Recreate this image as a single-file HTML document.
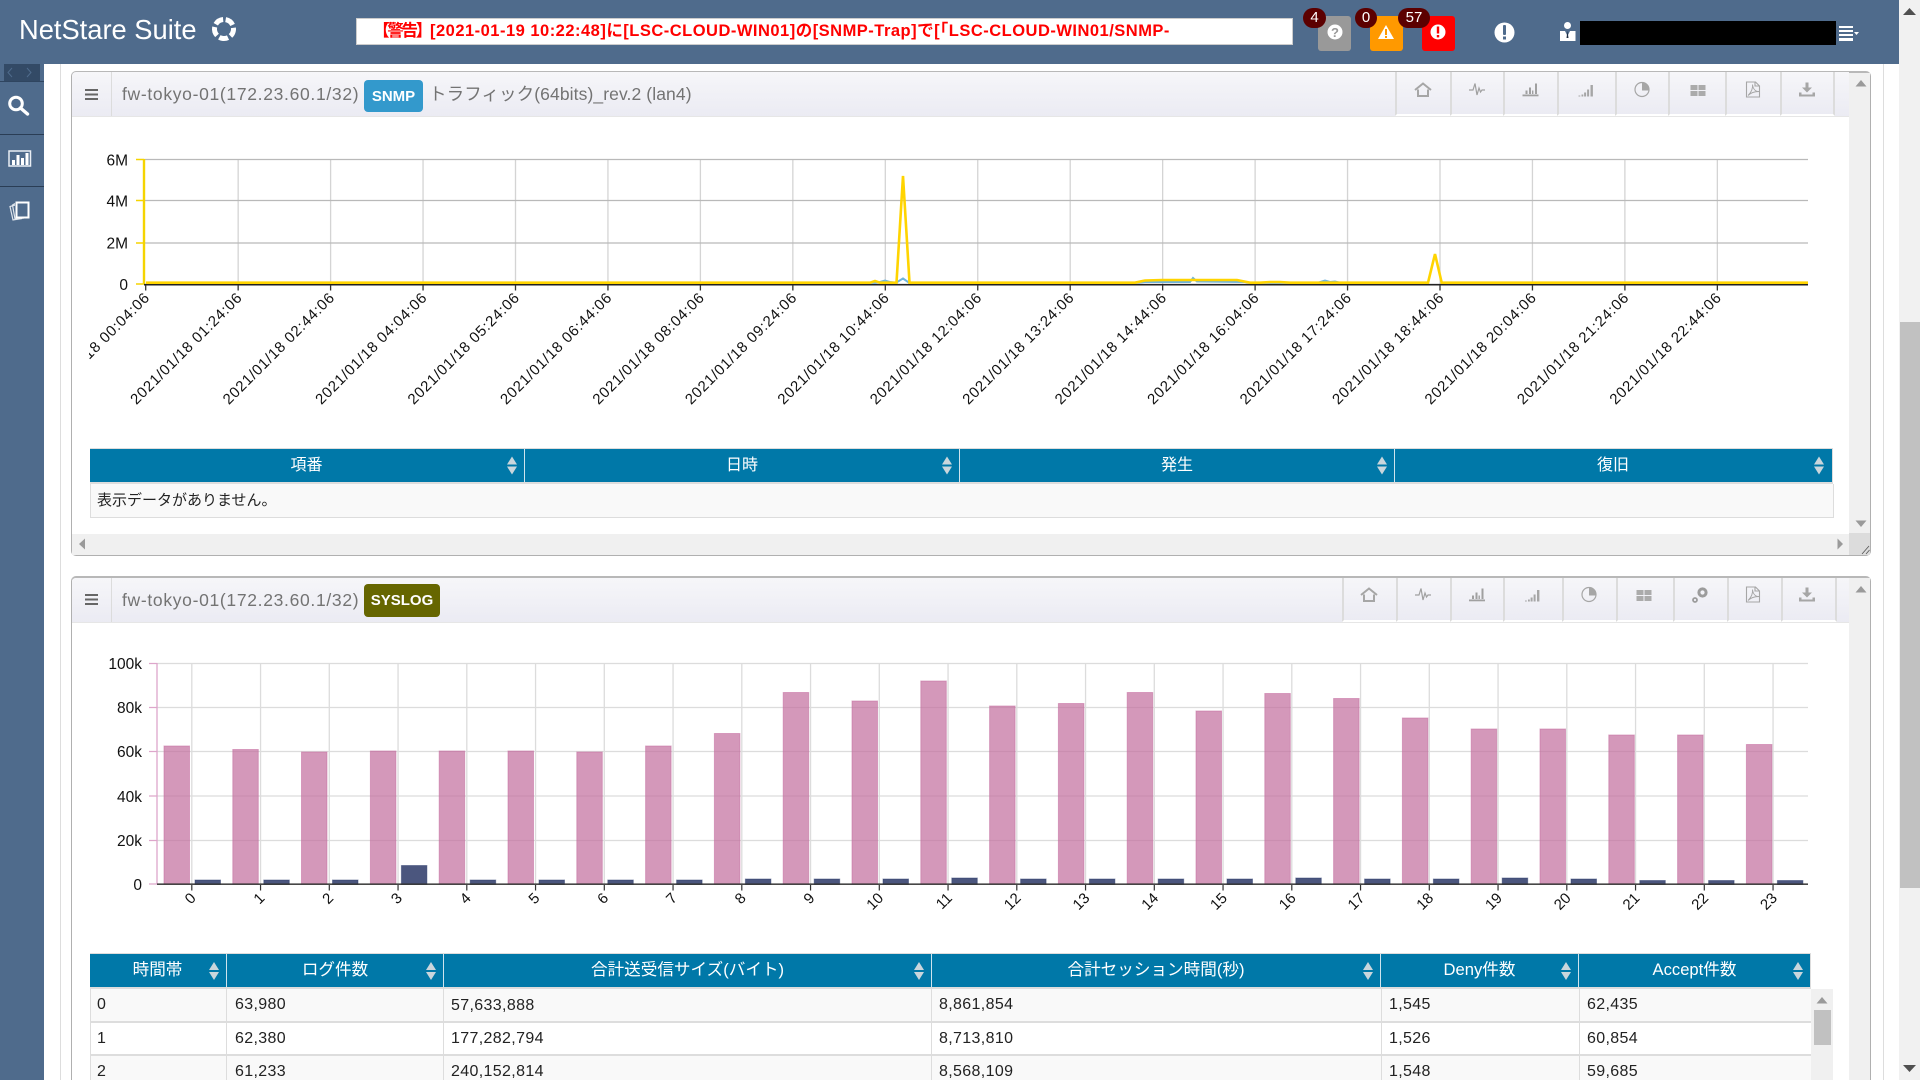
<!DOCTYPE html>
<html lang="ja"><head><meta charset="utf-8"><title>NetStare Suite</title>
<style>
html,body{margin:0;padding:0;width:1920px;height:1080px;overflow:hidden;background:#fff}
body{position:relative;font-family:"Liberation Sans","Noto Sans CJK JP",sans-serif;color:#222}
.a{position:absolute;box-sizing:border-box}
.th{position:absolute;color:#fff;font-size:16px;text-align:center;white-space:nowrap}
.t2{font-size:16.6px}
.td{position:absolute;font-size:16px;letter-spacing:.35px;color:#222;white-space:nowrap;line-height:20px}
.ph{position:absolute;background:linear-gradient(#f6f6f9,#ebebf3);height:44px}
.pt{position:absolute;font-size:17.5px;letter-spacing:.68px;color:#737373;white-space:nowrap;line-height:24px}
.bd{position:absolute;border-radius:4px;color:#fff;font-weight:bold;text-align:center;font-size:15px}
.cell{position:absolute;height:42px;background:linear-gradient(#f6f6f9,#ebebf3);border-left:2px solid #dcdcdc;border-bottom:2px solid #fff;box-sizing:content-box}
.cnt{position:absolute;background:#5c0000;color:#fff;font-size:15px;text-align:center;height:20px;line-height:19px;top:8px;border-radius:11px}
</style></head><body>

<!-- header -->
<div class="a" style="left:0;top:0;width:1899px;height:64px;background:#4f6b8c"></div>
<div class="a" style="left:19px;top:12px;font-size:27.3px;line-height:36px;color:#fff;white-space:nowrap">NetStare Suite</div>
<div class="a" style="left:356px;top:18px;width:937px;height:27px;background:#fff;border:1px solid #ccc;overflow:hidden;color:#f00;font-weight:bold;font-size:16.5px;letter-spacing:.49px;line-height:25px;padding-left:16px;white-space:nowrap"><span style="letter-spacing:-2.25px">【警告】</span>[2021-01-19 10:22:48]に[LSC-CLOUD-WIN01]の[SNMP-Trap]で[「LSC-CLOUD-WIN01/SNMP-</div>
<div class="a" style="left:1318px;top:16px;width:33px;height:35px;background:#999;border-radius:3px"></div>
<div class="a" style="left:1370px;top:16px;width:33px;height:35px;background:#f90;border-radius:3px"></div>
<div class="a" style="left:1422px;top:16px;width:33px;height:35px;background:#f00;border-radius:3px"></div>
<div class="cnt" style="left:1303px;width:23px">4</div>
<div class="cnt" style="left:1355px;width:22px">0</div>
<div class="cnt" style="left:1398px;width:32px">57</div>
<div class="a" style="left:1580px;top:21px;width:256px;height:24px;background:#000"></div>

<!-- sidebar -->
<div class="a" style="left:0;top:64px;width:44px;height:1016px;background:#4f6b8c"></div>
<div class="a" style="left:4px;top:64px;width:36px;height:17px;background:#334a66"></div>
<div class="a" style="left:0;top:81px;width:44px;height:1px;background:#2f4560"></div>
<div class="a" style="left:0;top:134px;width:44px;height:1px;background:#2a3d55"></div>
<div class="a" style="left:0;top:186px;width:44px;height:1px;background:#2a3d55"></div>

<!-- page lines & window scrollbar -->
<div class="a" style="left:60px;top:64px;width:1px;height:1016px;background:#ddd"></div>
<div class="a" style="left:1883px;top:64px;width:1px;height:1016px;background:#ddd"></div>
<div class="a" style="left:1899px;top:0;width:21px;height:1080px;background:#f1f1f1"></div>
<div class="a" style="left:1900px;top:322px;width:20px;height:566px;background:#c1c1c1"></div>

<!-- panel 1 -->
<div class="a" style="left:71px;top:71px;width:1800px;height:485px;border:1px solid #b0b0b0;border-top:2px solid #b8b8b8;border-radius:5px;background:#fff"></div>
<div class="a" style="left:1849px;top:73px;width:21px;height:461px;background:#f0f0f0"></div>
<div class="a" style="left:72px;top:534px;width:1777px;height:21px;background:#f0f0f0"></div>
<div class="a" style="left:1849px;top:533px;width:21px;height:22px;background:#dcdcdc"></div>
<div class="ph" style="left:72px;top:72px;width:1777px;border-radius:4px 0 0 0"></div>
<div class="a" style="left:72px;top:116px;width:1777px;height:1px;background:#e6e6e6"></div>
<div class="a" style="left:111px;top:72px;width:1px;height:44px;background:#dcdcdc"></div>
<div class="pt" style="left:122px;top:82px">fw-tokyo-01(172.23.60.1/32)</div>
<div class="bd" style="left:364px;top:80px;width:59px;height:32px;line-height:33px;background:#39c">SNMP</div>
<div class="pt" style="left:429px;top:82px;letter-spacing:.1px">トラフィック(64bits)_rev.2 (lan4)</div>
<div class="cell" style="left:1395px;top:72px;width:54px"></div>
<div class="cell" style="left:1450px;top:72px;width:52px"></div>
<div class="cell" style="left:1503px;top:72px;width:53px"></div>
<div class="cell" style="left:1557px;top:72px;width:57px"></div>
<div class="cell" style="left:1615px;top:72px;width:52px"></div>
<div class="cell" style="left:1668px;top:72px;width:56px"></div>
<div class="cell" style="left:1725px;top:72px;width:54px"></div>
<div class="cell" style="left:1780px;top:72px;width:51px;border-right:2px solid #dcdcdc"></div>

<!-- table 1 -->
<div class="a" style="left:90px;top:448px;width:1743px;height:36px;background:#ddd"></div>
<div class="a" style="left:90px;top:449px;width:1742px;height:33px;background:#0078a8"></div>
<div class="a" style="left:524px;top:449px;width:1px;height:33px;background:#cfe4ee"></div>
<div class="a" style="left:959px;top:449px;width:1px;height:33px;background:#cfe4ee"></div>
<div class="a" style="left:1394px;top:449px;width:1px;height:33px;background:#cfe4ee"></div>
<div class="th" style="left:89px;top:450px;width:435px;line-height:31px">項番</div>
<div class="th" style="left:525px;top:450px;width:434px;line-height:31px">日時</div>
<div class="th" style="left:960px;top:450px;width:434px;line-height:31px">発生</div>
<div class="th" style="left:1395px;top:450px;width:436px;line-height:31px">復旧</div>
<div class="a" style="left:90px;top:484px;width:1744px;height:34px;background:#f9f9f9;border:1px solid #ddd;border-top:0"></div>
<div class="td" style="left:97px;top:491px;font-size:15px;letter-spacing:0">表示データがありません。</div>

<!-- panel 2 -->
<div class="a" style="left:71px;top:576px;width:1800px;height:504px;border:1px solid #b0b0b0;border-top:2px solid #b8b8b8;border-bottom:0;border-radius:5px 5px 0 0;background:#fff"></div>
<div class="a" style="left:1849px;top:578px;width:21px;height:502px;background:#f0f0f0"></div>
<div class="ph" style="left:72px;top:578px;width:1777px;border-radius:4px 0 0 0"></div>
<div class="a" style="left:72px;top:622px;width:1777px;height:1px;background:#e6e6e6"></div>
<div class="a" style="left:111px;top:578px;width:1px;height:44px;background:#dcdcdc"></div>
<div class="pt" style="left:122px;top:588px">fw-tokyo-01(172.23.60.1/32)</div>
<div class="bd" style="left:364px;top:584px;width:76px;height:33px;line-height:34px;background:#660">SYSLOG</div>
<div class="cell" style="left:1342px;top:578px;width:53px;border-bottom:2px solid #fff"></div>
<div class="cell" style="left:1396px;top:578px;width:53px"></div>
<div class="cell" style="left:1450px;top:578px;width:52px"></div>
<div class="cell" style="left:1503px;top:578px;width:58px"></div>
<div class="cell" style="left:1562px;top:578px;width:53px"></div>
<div class="cell" style="left:1616px;top:578px;width:56px"></div>
<div class="cell" style="left:1673px;top:578px;width:53px"></div>
<div class="cell" style="left:1727px;top:578px;width:53px"></div>
<div class="cell" style="left:1781px;top:578px;width:52px;border-right:2px solid #dcdcdc"></div>

<!-- table 2 -->
<div class="a" style="left:90px;top:953px;width:1721px;height:127px;background:#ddd"></div>
<div class="a" style="left:90px;top:954px;width:1720px;height:33px;background:#0078a8"></div>
<div class="a" style="left:226px;top:954px;width:1px;height:33px;background:#cfe4ee"></div>
<div class="a" style="left:443px;top:954px;width:1px;height:33px;background:#cfe4ee"></div>
<div class="a" style="left:931px;top:954px;width:1px;height:33px;background:#cfe4ee"></div>
<div class="a" style="left:1380px;top:954px;width:1px;height:33px;background:#cfe4ee"></div>
<div class="a" style="left:1578px;top:954px;width:1px;height:33px;background:#cfe4ee"></div>
<div class="th t2" style="left:89px;top:955px;width:137px;line-height:30px">時間帯</div>
<div class="th t2" style="left:227px;top:955px;width:216px;line-height:30px">ログ件数</div>
<div class="th t2" style="left:444px;top:955px;width:487px;line-height:30px">合計送受信サイズ(バイト)</div>
<div class="th t2" style="left:932px;top:955px;width:448px;line-height:30px">合計セッション時間(秒)</div>
<div class="th t2" style="left:1381px;top:955px;width:197px;line-height:30px">Deny件数</div>
<div class="th t2" style="left:1579px;top:955px;width:231px;line-height:30px">Accept件数</div>
<div class="a" style="left:91px;top:989px;width:1720px;height:32px;background:#f9f9f9"></div>
<div class="a" style="left:91px;top:1023px;width:1720px;height:31px;background:#fff"></div>
<div class="a" style="left:91px;top:1056px;width:1720px;height:24px;background:#f9f9f9"></div>
<div class="a" style="left:226px;top:989px;width:1px;height:91px;background:#ddd"></div>
<div class="a" style="left:443px;top:989px;width:1px;height:91px;background:#ddd"></div>
<div class="a" style="left:931px;top:989px;width:1px;height:91px;background:#ddd"></div>
<div class="a" style="left:1381px;top:989px;width:1px;height:91px;background:#ddd"></div>
<div class="a" style="left:1579px;top:989px;width:1px;height:91px;background:#ddd"></div>
<div class="a" style="left:1811px;top:989px;width:22px;height:91px;background:#f0f0f0"></div>
<div class="a" style="left:1814px;top:1010px;width:17px;height:35px;background:#c1c1c1"></div>

<div class="td" style="left:97px;top:995px">0</div><div class="td" style="left:235px;top:995px">63,980</div><div class="td" style="left:451px;top:996px">57,633,888</div><div class="td" style="left:939px;top:995px">8,861,854</div><div class="td" style="left:1389px;top:995px">1,545</div><div class="td" style="left:1587px;top:995px">62,435</div>
<div class="td" style="left:97px;top:1029px">1</div><div class="td" style="left:235px;top:1029px">62,380</div><div class="td" style="left:451px;top:1029px">177,282,794</div><div class="td" style="left:939px;top:1029px">8,713,810</div><div class="td" style="left:1389px;top:1029px">1,526</div><div class="td" style="left:1587px;top:1029px">60,854</div>
<div class="td" style="left:97px;top:1062px">2</div><div class="td" style="left:235px;top:1062px">61,233</div><div class="td" style="left:451px;top:1062px">240,152,814</div><div class="td" style="left:939px;top:1062px">8,568,109</div><div class="td" style="left:1389px;top:1062px">1,548</div><div class="td" style="left:1587px;top:1062px">59,685</div>

<!-- overlay svg: charts + icons -->
<svg class="a" style="left:0;top:0;display:block" width="1920" height="1080" viewBox="0 0 1920 1080" font-family="'Liberation Sans','Noto Sans CJK JP',sans-serif">
<defs>
<clipPath id="c1"><rect x="89" y="120" width="1760" height="300"/></clipPath>
<g id="i-home" fill="none" stroke="#a6a6a6" stroke-width="2"><path d="M-8 0.5L0 -6L8 0.5"/><path d="M-5 0V6.5H5V0"/></g>
<g id="i-pulse" fill="none" stroke="#a0a0a0" stroke-width="1.2"><path d="M-8 1H-4L-2 -5.5L0 6L2 -1L3.5 3L5 1H8"/></g>
<g id="i-bar" fill="#a0a0a0"><rect x="-8" y="5" width="16" height="1.8"/><rect x="-5" y="1" width="2" height="3.5"/><rect x="-1.5" y="-2" width="2" height="6.5"/><rect x="1.5" y="1" width="1.4" height="3.5"/><rect x="4.5" y="-6" width="2" height="10.5"/></g>
<g id="i-sig" fill="#a6a6a6"><rect x="-8" y="5" width="1.8" height="1"/><rect x="-5" y="4" width="1.8" height="2"/><rect x="-2.4" y="2" width="2" height="4"/><rect x="0.6" y="-1" width="2" height="7"/><rect x="4" y="-5.5" width="2.4" height="11.5"/></g>
<g id="i-pie"><circle r="7" fill="none" stroke="#a6a6a6" stroke-width="1.2"/><path d="M0 -7.3A7.3 7.3 0 0 1 7.3 0V1H0Z" fill="#a6a6a6"/></g>
<g id="i-grid" fill="#ababab"><rect x="-7.5" y="-5.5" width="7" height="5"/><rect x="0.5" y="-5.5" width="7" height="5"/><rect x="-7.5" y="0.5" width="7" height="5"/><rect x="0.5" y="0.5" width="7" height="5"/></g>
<g id="i-pdf" fill="none" stroke="#a6a6a6" stroke-width="1.1"><path d="M-6.5 -7.5H2.5L6.5 -3.5V7.5H-6.5Z"/><path d="M2 -7.5V-3.5H6.5"/><path d="M-5 6C-2 3 0 -1 -0.5 -5C0 -1 2 2 6 2C2 2 -2 3 -5 6Z" stroke-width=".9"/></g>
<g id="i-dl" fill="#a6a6a6"><rect x="-1.5" y="-7" width="3" height="6"/><path d="M-5 -2H5L0 3Z"/><path d="M-8 3H-5.5V5H5.5V3H8V7H-8Z"/></g>
<g id="i-gear" fill="none" stroke="#9c9c9c"><circle cx="2.5" cy="-2.5" r="3.6" stroke-width="3"/><circle cx="-5" cy="5" r="2" stroke-width="1.8"/></g>
<g id="sort"><path d="M-5 -1L0 -9L5 -1Z" fill="#c9d6dc"/><path d="M-5 1L0 9L5 1Z" fill="#c9d6dc"/></g>
<path id="up" d="M-5.5 3.5L0 -3L5.5 3.5Z" fill="#9a9a9a"/>
<path id="dn" d="M-5.5 -3.5L0 3L5.5 -3.5Z" fill="#9a9a9a"/>
</defs>

<!-- logo ring -->
<circle cx="224" cy="29" r="9.5" fill="none" stroke="#fff" stroke-width="5" stroke-dasharray="9 2.94" transform="rotate(-80 224 29)"/>

<!-- status icons -->
<circle cx="1335" cy="32" r="7.5" fill="#fff"/><text x="1335" y="37" text-anchor="middle" font-size="13" font-weight="bold" fill="#999">?</text>
<path d="M1386 25L1394 39H1378Z" fill="#fff"/><rect x="1385" y="29" width="2" height="6" fill="#f90"/><rect x="1385" y="36" width="2" height="2" fill="#f90"/>
<circle cx="1438" cy="32" r="7.5" fill="#fff"/><rect x="1436.8" y="26.5" width="2.4" height="7" fill="#f00"/><rect x="1436.8" y="35" width="2.4" height="2.4" fill="#f00"/>
<circle cx="1504.5" cy="32.5" r="10" fill="#fff"/><rect x="1503" y="25" width="3" height="10" rx="1" fill="#4f6b8c"/><rect x="1503" y="36.5" width="3" height="3" fill="#4f6b8c"/>
<circle cx="1567.5" cy="25.5" r="3.5" fill="#fff"/><path d="M1560 41V31H1565L1567.5 36L1570 31H1575.5V41Z" fill="#fff"/><path d="M1567.5 31L1566.5 38H1568.5Z" fill="#1d2c40"/>
<path d="M1839 26h14v2h-14zM1839 30h14v2h-14zM1839 34h14v2h-14zM1839 38h14v3h-14z" fill="#fff"/><path d="M1854 32h5l-2.5 3z" fill="#fff"/>

<!-- sidebar icons -->
<path d="M12 68L8 72.5L12 77M27 68L31 72.5L27 77" fill="none" stroke="#4f6b8c" stroke-width="1"/>
<circle cx="16" cy="103.5" r="6.3" fill="none" stroke="#fff" stroke-width="3"/><path d="M20.5 108L27.5 114" stroke="#fff" stroke-width="3.4" stroke-linecap="round"/>
<rect x="9" y="151" width="21.5" height="15" fill="none" stroke="#e9eef4" stroke-width="1.5"/><path d="M12 160h3v5h-3zM16.5 155h3v10h-3zM21 158h3v7h-3zM25.5 153h3v12h-3z" fill="#fff"/>
<path d="M15 205L10 206.5L13 220L22 218.5" fill="none" stroke="#dfe5ec" stroke-width="1.2"/><path d="M15 203.5L12.5 205L15 219L24 218" fill="none" stroke="#dfe5ec" stroke-width="1.2"/>
<rect x="16.5" y="202.5" width="12" height="15" fill="#4f6b8c" stroke="#fff" stroke-width="2"/>

<!-- hamburgers -->
<path d="M85 89h13v2h-13zM85 93.5h13v2h-13zM85 98h13v2h-13z" fill="#666"/>
<path d="M85 594h13v2h-13zM85 598.5h13v2h-13zM85 603h13v2h-13z" fill="#666"/>

<!-- toolbar 1 -->
<use href="#i-home" x="1423" y="89.5"/><use href="#i-pulse" x="1477" y="89"/><use href="#i-bar" x="1530.5" y="89.5"/><use href="#i-sig" x="1586.5" y="90.5"/><use href="#i-pie" x="1642" y="89.5"/><use href="#i-grid" x="1698" y="90.5"/><use href="#i-pdf" x="1753" y="89.5"/><use href="#i-dl" x="1807" y="89.5"/>
<!-- toolbar 2 -->
<use href="#i-home" x="1369" y="594.5"/><use href="#i-pulse" x="1423" y="594"/><use href="#i-bar" x="1477" y="594.5"/><use href="#i-sig" x="1533" y="595.5"/><use href="#i-pie" x="1589" y="594.5"/><use href="#i-grid" x="1644" y="595.5"/><use href="#i-gear" x="1700" y="595"/><use href="#i-pdf" x="1753" y="594.5"/><use href="#i-dl" x="1807" y="594.5"/>

<!-- scroll arrows -->
<use href="#up" x="1861" y="83"/><use href="#dn" x="1861" y="524"/><use href="#up" x="1861" y="589"/>
<path d="M79 544L85 538.5V549.5Z" fill="#9a9a9a"/><path d="M1843 544L1837.5 538.5V549.5Z" fill="#9a9a9a"/>
<path d="M1862 554L1869 546M1866 554L1869.5 550" stroke="#555" stroke-width=".8"/>
<path d="M1903 15L1909.5 8L1916 15Z" fill="#505050"/><path d="M1903 1065L1909.5 1072L1916 1065Z" fill="#505050"/>
<use href="#up" x="1822" y="1000"/>

<!-- sort icons table 1 -->
<use href="#sort" x="512" y="465.5"/><use href="#sort" x="947" y="465.5"/><use href="#sort" x="1382" y="465.5"/><use href="#sort" x="1819" y="465.5"/>
<!-- sort icons table 2 -->
<use href="#sort" x="214" y="971"/><use href="#sort" x="431" y="971"/><use href="#sort" x="919" y="971"/><use href="#sort" x="1368" y="971"/><use href="#sort" x="1566" y="971"/><use href="#sort" x="1798" y="971"/>

<!-- chart 1 grid -->
<g stroke="#d4d4d4" stroke-width="1.3">
<path d="M238.15 159V284M330.6 159V284M423.05 159V284M515.5 159V284M607.95 159V284M700.4 159V284M792.85 159V284M885.3 159V284M977.75 159V284M1070.2 159V284M1162.65 159V284M1255.1 159V284M1347.55 159V284M1440 159V284M1532.45 159V284M1624.9 159V284M1717.35 159V284"/>
</g>
<g stroke="#b9b9b9" stroke-width="1.3"><path d="M144 159.5H1808M144 200.5H1808M144 243H1808"/></g>
<g stroke="#f5d400" stroke-width="1.6"><path d="M136 159.5H144M136 200.5H144M136 243H144M136 284H144"/></g>
<path d="M144 159V284" stroke="#f5d400" stroke-width="2.4"/>
<path d="M144 284.7H1808" stroke="#222" stroke-width="1.6"/>
<g stroke="#333" stroke-width="1.3"><path d="M145.7 285V290.5M238.15 285V290.5M330.6 285V290.5M423.05 285V290.5M515.5 285V290.5M607.95 285V290.5M700.4 285V290.5M792.85 285V290.5M885.3 285V290.5M977.75 285V290.5M1070.2 285V290.5M1162.65 285V290.5M1255.1 285V290.5M1347.55 285V290.5M1440 285V290.5M1532.45 285V290.5M1624.9 285V290.5M1717.35 285V290.5"/></g>
<path d="M850 282.7L875 282.7L880 282L885 280.5L890 282L896 282.7L903 278.5L909 282.7M1135 282.7L1145 282L1190 282L1193 278L1197 281.5L1245 282L1250 282.7L1318 282.7L1325 280.5L1330 282L1335 281.5L1340 282.7" fill="none" stroke="#6fb5dc" stroke-width="2"/>
<path d="M146 282.7H870L875 281L880 282.7H896.5L903 176L909.5 282.7H1135L1145 280.5L1162 280L1237 280L1250 282.7H1260L1270 282H1280L1290 282.7H1428L1435 254L1441.7 282.7H1808" fill="none" stroke="#ffd400" stroke-width="2.6" stroke-linejoin="miter"/>

<g font-size="15.5" fill="#111" text-anchor="end"><text x="128" y="165.5">6M</text><text x="128" y="206.5">4M</text><text x="128" y="248.5">2M</text><text x="128" y="290">0</text></g>

<g font-size="15" letter-spacing=".7" fill="#111" text-anchor="end" clip-path="url(#c1)">
<text x="150.7" y="298.5" transform="rotate(-45 150.7 298.5)">2021/01/18 00:04:06</text>
<text x="243.15" y="298.5" transform="rotate(-45 243.15 298.5)">2021/01/18 01:24:06</text>
<text x="335.6" y="298.5" transform="rotate(-45 335.6 298.5)">2021/01/18 02:44:06</text>
<text x="428.05" y="298.5" transform="rotate(-45 428.05 298.5)">2021/01/18 04:04:06</text>
<text x="520.5" y="298.5" transform="rotate(-45 520.5 298.5)">2021/01/18 05:24:06</text>
<text x="612.95" y="298.5" transform="rotate(-45 612.95 298.5)">2021/01/18 06:44:06</text>
<text x="705.4" y="298.5" transform="rotate(-45 705.4 298.5)">2021/01/18 08:04:06</text>
<text x="797.85" y="298.5" transform="rotate(-45 797.85 298.5)">2021/01/18 09:24:06</text>
<text x="890.3" y="298.5" transform="rotate(-45 890.3 298.5)">2021/01/18 10:44:06</text>
<text x="982.75" y="298.5" transform="rotate(-45 982.75 298.5)">2021/01/18 12:04:06</text>
<text x="1075.2" y="298.5" transform="rotate(-45 1075.2 298.5)">2021/01/18 13:24:06</text>
<text x="1167.65" y="298.5" transform="rotate(-45 1167.65 298.5)">2021/01/18 14:44:06</text>
<text x="1260.1" y="298.5" transform="rotate(-45 1260.1 298.5)">2021/01/18 16:04:06</text>
<text x="1352.55" y="298.5" transform="rotate(-45 1352.55 298.5)">2021/01/18 17:24:06</text>
<text x="1445" y="298.5" transform="rotate(-45 1445 298.5)">2021/01/18 18:44:06</text>
<text x="1537.45" y="298.5" transform="rotate(-45 1537.45 298.5)">2021/01/18 20:04:06</text>
<text x="1629.9" y="298.5" transform="rotate(-45 1629.9 298.5)">2021/01/18 21:24:06</text>
<text x="1722.35" y="298.5" transform="rotate(-45 1722.35 298.5)">2021/01/18 22:44:06</text>
</g>

<!-- chart 2 grid -->
<g stroke="#dcdcdc" stroke-width="1.3">
<path d="M157 663.5H1808M157 707.5H1808M157 751.5H1808M157 796H1808M157 840.5H1808"/>
<path d="M191.8 663V884M260.55 663V884M329.3 663V884M398.05 663V884M466.8 663V884M535.55 663V884M604.3 663V884M673.05 663V884M741.8 663V884M810.55 663V884M879.3 663V884M948.05 663V884M1016.8 663V884M1085.55 663V884M1154.3 663V884M1223.05 663V884M1291.8 663V884M1360.55 663V884M1429.3 663V884M1498.05 663V884M1566.8 663V884M1635.55 663V884M1704.3 663V884M1773.05 663V884"/>
</g>
<g stroke="#dda6cb" stroke-width="1.3"><path d="M157 663V884M149 663.5H157M149 707.5H157M149 751.5H157M149 796H157M149 840.5H157M149 884H157"/></g>

<!-- pink bars -->
<g fill="#c470a0" fill-opacity=".72" stroke="#c470a0" stroke-opacity=".55" stroke-width="1">
<rect x="164" y="746" width="25.5" height="138"/><rect x="232.8" y="749.5" width="25.5" height="134.5"/><rect x="301.5" y="752" width="25.5" height="132"/><rect x="370.4" y="751" width="25.5" height="133"/><rect x="439.2" y="751" width="25.5" height="133"/><rect x="508" y="751" width="25.5" height="133"/><rect x="576.8" y="752" width="25.5" height="132"/><rect x="645.6" y="746" width="25.5" height="138"/><rect x="714.4" y="733.5" width="25.5" height="150.5"/><rect x="783.2" y="692.5" width="25.5" height="191.5"/><rect x="852" y="701" width="25.5" height="183"/><rect x="920.8" y="681" width="25.5" height="203"/><rect x="989.6" y="706" width="25.5" height="178"/><rect x="1058.4" y="703.5" width="25.5" height="180.5"/><rect x="1127.2" y="692.5" width="25.5" height="191.5"/><rect x="1196" y="711" width="25.5" height="173"/><rect x="1264.8" y="693.5" width="25.5" height="190.5"/><rect x="1333.6" y="698.5" width="25.5" height="185.5"/><rect x="1402.4" y="718" width="25.5" height="166"/><rect x="1471.2" y="729" width="25.5" height="155"/><rect x="1540" y="729" width="25.5" height="155"/><rect x="1608.8" y="735" width="25.5" height="149"/><rect x="1677.6" y="735" width="25.5" height="149"/><rect x="1746.4" y="744.5" width="25.5" height="139.5"/>
</g>
<!-- dark bars -->
<g fill="#1e2c5e" fill-opacity=".8" stroke="#283769" stroke-opacity=".45" stroke-width="1">
<rect x="195" y="880" width="25.5" height="4.5"/><rect x="263.8" y="880" width="25.5" height="4.5"/><rect x="332.5" y="880" width="25.5" height="4.5"/><rect x="401.4" y="865.5" width="25.5" height="19"/><rect x="470.2" y="880" width="25.5" height="4.5"/><rect x="539" y="880" width="25.5" height="4.5"/><rect x="607.8" y="880" width="25.5" height="4.5"/><rect x="676.6" y="880" width="25.5" height="4.5"/><rect x="745.4" y="879" width="25.5" height="5.5"/><rect x="814.2" y="879" width="25.5" height="5.5"/><rect x="883" y="879" width="25.5" height="5.5"/><rect x="951.8" y="878" width="25.5" height="6.5"/><rect x="1020.6" y="879" width="25.5" height="5.5"/><rect x="1089.4" y="879" width="25.5" height="5.5"/><rect x="1158.2" y="879" width="25.5" height="5.5"/><rect x="1227" y="879" width="25.5" height="5.5"/><rect x="1295.8" y="878" width="25.5" height="6.5"/><rect x="1364.6" y="879" width="25.5" height="5.5"/><rect x="1433.4" y="879" width="25.5" height="5.5"/><rect x="1502.2" y="878" width="25.5" height="6.5"/><rect x="1571" y="879" width="25.5" height="5.5"/><rect x="1639.8" y="880.5" width="25.5" height="4"/><rect x="1708.6" y="880.5" width="25.5" height="4"/><rect x="1777.4" y="880.5" width="25.5" height="4"/>
</g>
<path d="M157 884.2H1808" stroke="#333" stroke-width="1.6" stroke-opacity=".9"/>
<g stroke="#333" stroke-width="1.2"><path d="M191.8 885V890.5M260.55 885V890.5M329.3 885V890.5M398.05 885V890.5M466.8 885V890.5M535.55 885V890.5M604.3 885V890.5M673.05 885V890.5M741.8 885V890.5M810.55 885V890.5M879.3 885V890.5M948.05 885V890.5M1016.8 885V890.5M1085.55 885V890.5M1154.3 885V890.5M1223.05 885V890.5M1291.8 885V890.5M1360.55 885V890.5M1429.3 885V890.5M1498.05 885V890.5M1566.8 885V890.5M1635.55 885V890.5M1704.3 885V890.5M1773.05 885V890.5"/></g>

<g font-size="15.5" fill="#111" text-anchor="end"><text x="142" y="669">100k</text><text x="142" y="713">80k</text><text x="142" y="757">60k</text><text x="142" y="802">40k</text><text x="142" y="846">20k</text><text x="142" y="890">0</text></g>
<g font-size="15" fill="#111" text-anchor="end">
<text x="196.8" y="899" transform="rotate(-45 196.8 899)">0</text>
<text x="265.55" y="899" transform="rotate(-45 265.55 899)">1</text>
<text x="334.3" y="899" transform="rotate(-45 334.3 899)">2</text>
<text x="403.05" y="899" transform="rotate(-45 403.05 899)">3</text>
<text x="471.8" y="899" transform="rotate(-45 471.8 899)">4</text>
<text x="540.55" y="899" transform="rotate(-45 540.55 899)">5</text>
<text x="609.3" y="899" transform="rotate(-45 609.3 899)">6</text>
<text x="678.05" y="899" transform="rotate(-45 678.05 899)">7</text>
<text x="746.8" y="899" transform="rotate(-45 746.8 899)">8</text>
<text x="815.55" y="899" transform="rotate(-45 815.55 899)">9</text>
<text x="884.3" y="899" transform="rotate(-45 884.3 899)">10</text>
<text x="953.05" y="899" transform="rotate(-45 953.05 899)">11</text>
<text x="1021.8" y="899" transform="rotate(-45 1021.8 899)">12</text>
<text x="1090.55" y="899" transform="rotate(-45 1090.55 899)">13</text>
<text x="1159.3" y="899" transform="rotate(-45 1159.3 899)">14</text>
<text x="1228.05" y="899" transform="rotate(-45 1228.05 899)">15</text>
<text x="1296.8" y="899" transform="rotate(-45 1296.8 899)">16</text>
<text x="1365.55" y="899" transform="rotate(-45 1365.55 899)">17</text>
<text x="1434.3" y="899" transform="rotate(-45 1434.3 899)">18</text>
<text x="1503.05" y="899" transform="rotate(-45 1503.05 899)">19</text>
<text x="1571.8" y="899" transform="rotate(-45 1571.8 899)">20</text>
<text x="1640.55" y="899" transform="rotate(-45 1640.55 899)">21</text>
<text x="1709.3" y="899" transform="rotate(-45 1709.3 899)">22</text>
<text x="1778.05" y="899" transform="rotate(-45 1778.05 899)">23</text>
</g>
</svg>
</body></html>
